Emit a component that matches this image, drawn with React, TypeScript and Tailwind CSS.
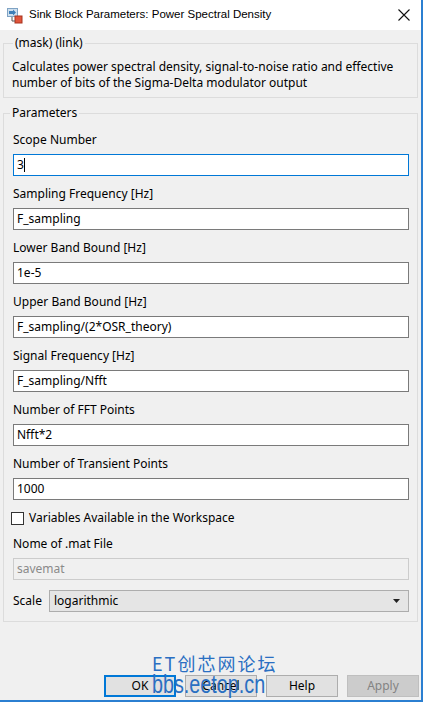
import React from 'react';

const fields: [string, string][] = [
  ['Scope Number', '3'],
  ['Sampling Frequency [Hz]', 'F_sampling'],
  ['Lower Band Bound [Hz]', '1e-5'],
  ['Upper Band Bound [Hz]', 'F_sampling/(2*OSR_theory)'],
  ['Signal Frequency [Hz]', 'F_sampling/Nfft'],
  ['Number of FFT Points', 'Nfft*2'],
  ['Number of Transient Points', '1000'],
];

const BlockIcon = () => (
  <svg width="16" height="16" viewBox="0 0 16 16">
    <rect x="0.5" y="0.5" width="10" height="8" fill="#cfe0ee" stroke="#7fa3c4" />
    <path d="M2 3 L6 3 L6 1.5 L9 4.5 L6 7.5 L6 6 L2 6 Z" fill="#3d7fb8" />
    <rect x="8" y="8" width="7" height="7" fill="#e0553b" stroke="#a8331f" />
    <path d="M5 9 L5 13 L8 13" stroke="#555" fill="none" />
  </svg>
);

const App = () => {
  return (
    <div
      className="relative w-[423px] h-[702px] bg-[#f0f0f0] border-r-2 border-b-2 border-[#2b7fd1] text-[12px] text-black flex flex-col overflow-hidden"
      style={{ fontFamily: '"Segoe UI", "Noto Sans", "Liberation Sans", sans-serif' }}
    >
      {/* Title bar */}
      <div className="h-[30px] bg-white flex items-center shrink-0">
        <div className="ml-[7px] mt-[1px]">
          <BlockIcon />
        </div>
        <span className="ml-[6px] leading-none text-[11.5px] font-['Liberation_Sans',sans-serif]">
          Sink Block Parameters: Power Spectral Density
        </span>
        <svg className="ml-auto mr-[11px]" width="12" height="12" viewBox="0 0 12 12">
          <path d="M0.5 0.5 L11.5 11.5 M11.5 0.5 L0.5 11.5" stroke="#111" strokeWidth="1.1" />
        </svg>
      </div>

      <div className="px-[3px]">
        {/* Mask group */}
        <fieldset className="mt-[5px] border border-[#dcdcdc] pb-[7px] pl-[8px] pr-2">
          <legend className="ml-[1px] px-[2px] leading-[16px]">(mask) (link)</legend>
          <p className="mt-[8px] leading-[15.5px]">
            Calculates power spectral density, signal-to-noise ratio and effective number of bits of the Sigma-Delta modulator output
          </p>
        </fieldset>

        {/* Parameters group */}
        <fieldset className="mt-[7px] border border-[#dcdcdc] pl-[9px] pr-[8px] pb-[9px]">
          <legend className="-ml-[3px] px-[2px] leading-[16px]">Parameters</legend>
          <div className="flex flex-col gap-[10px] pt-[11px]">
            {fields.map(([label, value], i) => (
              <div key={label} className="flex flex-col gap-[6px]">
                <span className="leading-[16px]">{label}</span>
                <div
                  className={
                    i === 0
                      ? 'h-[22px] bg-white border border-[#0078d7] px-[3px] flex items-center'
                      : 'h-[22px] bg-white border border-[#7a7a7a] px-[3px] flex items-center'
                  }
                >
                  <span>{value}</span>
                  {i === 0 && <span className="w-px h-[14px] bg-black" />}
                </div>
              </div>
            ))}

            <div className="flex items-center gap-[5px] leading-[16px] -ml-[2px]">
              <div className="w-[13px] h-[13px] bg-white border border-[#333]" />
              <span>Variables Available in the Workspace</span>
            </div>

            <div className="flex flex-col gap-[6px]">
              <span className="leading-[16px]">Nome of .mat File</span>
              <div className="h-[22px] bg-[#f0f0f0] border border-[#cccccc] px-[3px] flex items-center text-[#8a8a8a]">
                savemat
              </div>
            </div>

            <div className="flex items-center gap-[7px]">
              <span>Scale</span>
              <div className="flex-1 h-[22px] bg-[#e5e5e5] border border-[#adadad] px-[4px] flex items-center">
                <span>logarithmic</span>
                <svg className="ml-auto mr-[4px]" width="7" height="4" viewBox="0 0 7 4">
                  <path d="M0 0 L7 0 L3.5 4 Z" fill="#222" />
                </svg>
              </div>
            </div>
          </div>
        </fieldset>
      </div>

      {/* Buttons */}
      <div className="mt-auto mb-[3px] flex gap-[9px] pl-[104px]">
        <div className="w-[72px] h-[22px] bg-[#e1e1e1] border-2 border-[#0078d7] flex items-center justify-center">OK</div>
        <div className="w-[72px] h-[22px] bg-[#e1e1e1] border border-[#adadad] flex items-center justify-center">Cancel</div>
        <div className="w-[72px] h-[22px] bg-[#e1e1e1] border border-[#adadad] flex items-center justify-center">Help</div>
        <div className="w-[72px] h-[22px] bg-[#cccccc] border border-[#bfbfbf] flex items-center justify-center text-[#838383]">Apply</div>
      </div>

      {/* Watermark */}
      <div className="absolute left-[152px] top-[654px] pointer-events-none text-[#2a6fc2] flex flex-col items-start leading-none">
        <span className="text-[18px] tracking-[2px] font-['Noto_Sans_CJK_SC',sans-serif]">ET创芯网论坛</span>
        <span className="text-[26px] -mt-[1px] scale-x-[0.76] origin-left font-['Liberation_Sans',sans-serif]">
          bbs.eetop.cn
        </span>
      </div>
    </div>
  );
};

export default App;
